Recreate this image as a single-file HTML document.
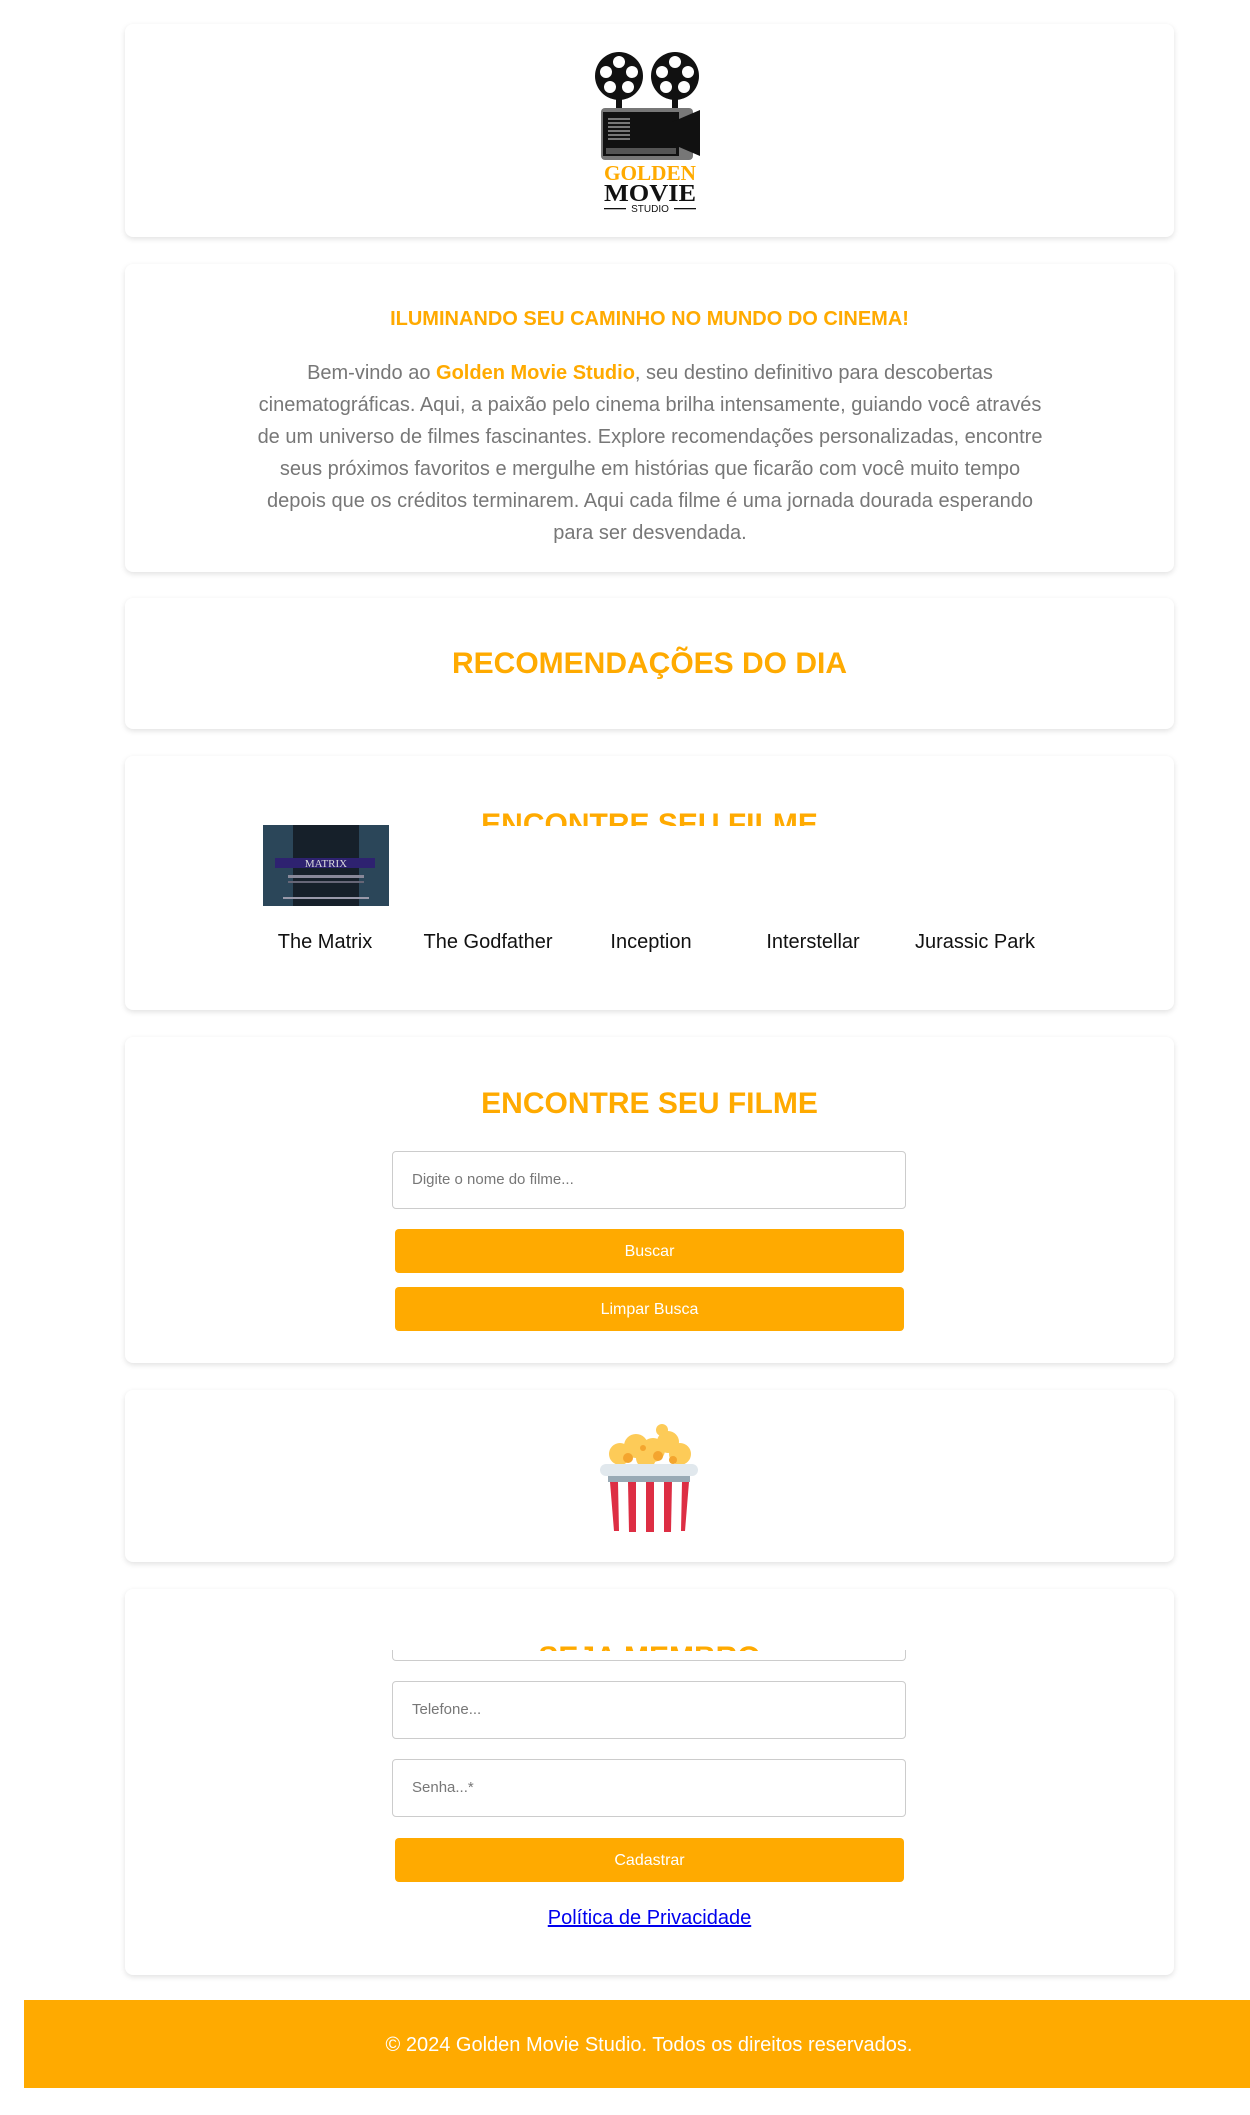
<!DOCTYPE html>
<html><head><meta charset="utf-8"><style>
*{margin:0;padding:0;box-sizing:border-box}
body{width:1250px;height:2115px;background:#fff;font-family:"Liberation Sans",sans-serif;position:relative;overflow:hidden}
.card{position:absolute;left:125px;width:1049px;background:#fff;border-radius:8px;box-shadow:0 2px 6px rgba(0,0,0,0.12)}
.abs{position:absolute}
.or{color:#FFAA00;font-weight:bold}
.h{position:absolute;left:0;width:100%;text-align:center;font-size:30px;color:#FFAA00;font-weight:bold}
.inp{position:absolute;left:267px;width:514px;height:58px;border:1px solid #ccc;border-radius:4px;font-size:15px;color:#777;padding:19px 19px}
.btn{position:absolute;left:270px;width:509px;height:44px;background:#FFAA00;border-radius:4px;color:#fff;font-size:16px;text-align:center;line-height:46px}
</style></head><body>

<div class="card" style="top:24px;height:213px">
<svg class="abs" style="left:469px;top:26px" width="112" height="163" viewBox="0 0 112 163">
<g fill="#111"><circle cx="25" cy="26" r="24"/><circle cx="81" cy="26" r="24"/></g>
<g fill="#fff"><circle cx="25" cy="12" r="6"/><circle cx="12" cy="22" r="6"/><circle cx="38" cy="22" r="6"/><circle cx="16" cy="37" r="6"/><circle cx="34" cy="37" r="6"/>
<circle cx="81" cy="12" r="6"/><circle cx="68" cy="22" r="6"/><circle cx="94" cy="22" r="6"/><circle cx="72" cy="37" r="6"/><circle cx="90" cy="37" r="6"/></g>
<rect x="22" y="26" width="6" height="34" fill="#111"/><rect x="78" y="26" width="6" height="34" fill="#111"/>
<rect x="7" y="58" width="92" height="52" rx="4" fill="#777"/>
<rect x="9" y="62" width="76" height="44" fill="#111"/>
<g fill="#777"><rect x="14" y="68" width="22" height="2"/><rect x="14" y="72" width="22" height="2"/><rect x="14" y="76" width="22" height="2"/><rect x="14" y="80" width="22" height="2"/><rect x="14" y="84" width="22" height="2"/><rect x="14" y="88" width="22" height="2"/></g>
<rect x="12" y="98" width="70" height="6" fill="#555"/>
<path d="M78 72 L106 60 L106 106 L78 94 Z" fill="#111"/>
<text x="56" y="130" text-anchor="middle" font-family="Liberation Serif,serif" font-weight="bold" font-size="21" fill="#FFAA00" textLength="92" lengthAdjust="spacingAndGlyphs">GOLDEN</text>
<text x="56" y="151" text-anchor="middle" font-family="Liberation Serif,serif" font-weight="bold" font-size="24" fill="#111" textLength="92" lengthAdjust="spacingAndGlyphs">MOVIE</text>
<text x="56" y="162" text-anchor="middle" font-size="10" fill="#111">STUDIO</text>
<rect x="10" y="158" width="22" height="1.3" fill="#111"/><rect x="80" y="158" width="22" height="1.3" fill="#111"/>
</svg>
</div>

<div class="card" style="top:264px;height:308px">
<div class="abs or" style="left:0;width:100%;top:44px;text-align:center;font-size:20px">ILUMINANDO SEU CAMINHO NO MUNDO DO CINEMA!</div>
<p class="abs" style="left:130px;width:790px;top:93px;text-align:center;font-size:20px;line-height:32px;color:#777">Bem-vindo ao <span class="or">Golden Movie Studio</span>, seu destino definitivo para descobertas cinematográficas. Aqui, a paixão pelo cinema brilha intensamente, guiando você através de um universo de filmes fascinantes. Explore recomendações personalizadas, encontre seus próximos favoritos e mergulhe em histórias que ficarão com você muito tempo depois que os créditos terminarem. Aqui cada filme é uma jornada dourada esperando para ser desvendada.</p>
</div>

<div class="card" style="top:598px;height:131px">
<div class="h" style="top:49px">RECOMENDAÇÕES DO DIA</div>
</div>

<div class="card" style="top:756px;height:254px">
<div class="abs" style="left:0;width:100%;top:50px;height:20px;overflow:hidden"><div class="h" style="top:2px">ENCONTRE SEU FILME</div></div>
<svg class="abs" style="left:138px;top:69px" width="126" height="81" viewBox="0 0 126 81">
<rect width="126" height="81" rx="4" fill="#16202a"/>
<rect x="0" y="0" width="30" height="81" fill="#2b4659"/><rect x="96" y="0" width="30" height="81" fill="#2b4659"/>
<rect x="12" y="33" width="100" height="10" fill="#2e2270"/>
<text x="63" y="42" text-anchor="middle" font-family="Liberation Serif,serif" font-size="11" fill="#ddd">MATRIX</text>
<rect x="25" y="50" width="76" height="3" fill="#889"/><rect x="25" y="56" width="76" height="2" fill="#667"/><rect x="20" y="72" width="86" height="2" fill="#99a"/>
</svg>
<div class="abs" style="top:175px;left:0;width:100%;font-size:20px;color:#111">
<span class="abs" style="left:100px;width:200px;text-align:center">The Matrix</span>
<span class="abs" style="left:263px;width:200px;text-align:center">The Godfather</span>
<span class="abs" style="left:426px;width:200px;text-align:center">Inception</span>
<span class="abs" style="left:588px;width:200px;text-align:center">Interstellar</span>
<span class="abs" style="left:750px;width:200px;text-align:center">Jurassic Park</span>
</div>
</div>

<div class="card" style="top:1037px;height:326px">
<div class="h" style="top:50px">ENCONTRE SEU FILME</div>
<div class="inp" style="top:114px">Digite o nome do filme...</div>
<div class="btn" style="top:192px">Buscar</div>
<div class="btn" style="top:250px">Limpar Busca</div>
</div>

<div class="card" style="top:1390px;height:172px">
<svg class="abs" style="left:473px;top:32px" width="102" height="111" viewBox="0 0 102 111">
<g fill="#FDCB58"><circle cx="22" cy="32" r="11"/><circle cx="38" cy="24" r="12"/><circle cx="55" cy="28" r="12"/><circle cx="70" cy="20" r="11"/><circle cx="82" cy="32" r="11"/><circle cx="64" cy="8" r="6"/><circle cx="48" cy="36" r="10"/></g>
<g fill="#F4A52E"><circle cx="30" cy="36" r="5"/><circle cx="60" cy="34" r="5"/><circle cx="75" cy="38" r="4"/><circle cx="45" cy="26" r="3"/></g>
<rect x="2" y="42" width="98" height="12" rx="6" fill="#E1E8ED"/>
<path d="M10 54 L92 54 L88 104 Q87 110 80 110 L22 110 Q15 110 14 104 Z" fill="#fff"/>
<rect x="10" y="54" width="82" height="6" fill="#99AAB5"/>
<g fill="#DD2E44"><path d="M12 60 L20 60 L21 109 L16 109 Z"/><path d="M30 60 L38 60 L38 110 L31 110 Z"/><path d="M48 60 L56 60 L56 110 L48 110 Z"/><path d="M66 60 L74 60 L73 110 L66 110 Z"/><path d="M84 60 L91 60 L87 109 L83 109 Z"/></g>
</svg>
</div>

<div class="card" style="top:1589px;height:386px">
<div class="abs" style="left:0;width:100%;top:50px;height:12px;overflow:hidden"><div class="h" style="top:2px">SEJA MEMBRO</div></div>
<div class="abs" style="left:267px;width:514px;top:61px;height:11px;border:1px solid #ccc;border-top:none;border-radius:0 0 4px 4px"></div>
<div class="inp" style="top:92px">Telefone...</div>
<div class="inp" style="top:170px">Senha...*</div>
<div class="btn" style="top:249px">Cadastrar</div>
<div class="abs" style="left:0;width:100%;top:318px;text-align:center;font-size:20px"><span style="color:#0000EE;text-decoration:underline">Política de Privacidade</span></div>
</div>

<div class="abs" style="left:24px;top:2000px;width:1226px;height:88px;background:#FFAA00;color:#fff;font-size:20px;text-align:center;line-height:90px;padding-left:24px">© 2024 Golden Movie Studio. Todos os direitos reservados.</div>
</body></html>
